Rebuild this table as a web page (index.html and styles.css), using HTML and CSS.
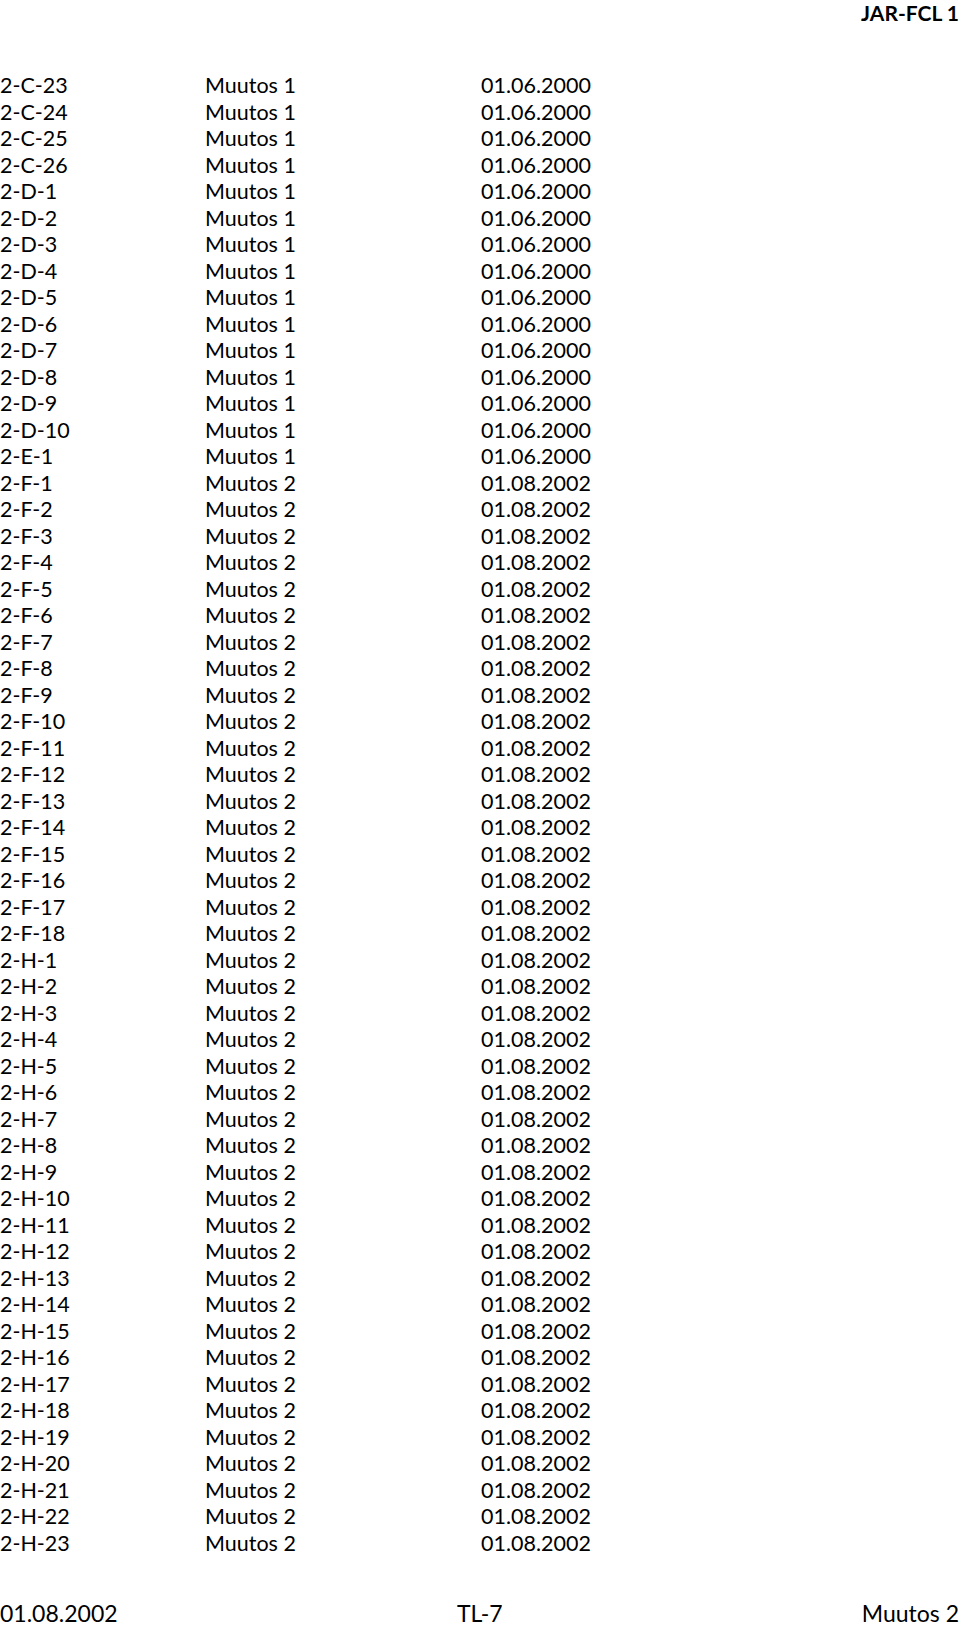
FILE: index.html
```html
<!DOCTYPE html>
<html lang="fi">
<head>
<meta charset="utf-8">
<title>JAR-FCL 1 – TL-7</title>
<link rel="stylesheet" href="styles.css">
</head>
<body>
<div class="page">
  <header class="page-header">JAR-FCL 1</header>
  <main class="list" id="list"></main>
  <footer class="page-footer">
    <span class="foot-left">01.08.2002</span>
    <span class="foot-center">TL-7</span>
    <span class="foot-right">Muutos 2</span>
  </footer>
</div>
<script src="script.js"></script>
</body>
</html>
```

FILE: script.js
```js
(function () {
  var rows = [];
  function add(prefix, from, to, change, date) {
    for (var i = from; i <= to; i++) rows.push([prefix + i, change, date]);
  }
  add('2-C-', 23, 26, 'Muutos 1', '01.06.2000');
  add('2-D-', 1, 10, 'Muutos 1', '01.06.2000');
  add('2-E-', 1, 1, 'Muutos 1', '01.06.2000');
  add('2-F-', 1, 18, 'Muutos 2', '01.08.2002');
  add('2-H-', 1, 23, 'Muutos 2', '01.08.2002');
  var list = document.getElementById('list');
  rows.forEach(function (r) {
    var row = document.createElement('div');
    row.className = 'row';
    r.forEach(function (t, i) {
      var c = document.createElement('span');
      c.className = 'cell cell-' + (i + 1);
      c.textContent = t;
      row.appendChild(c);
    });
    list.appendChild(row);
  });
})();
```

FILE: styles.css
```css
html, body {
  margin: 0;
  padding: 0;
  background: #fff;
}
body {
  font-family: "Lato", "Open Sans", sans-serif;
  color: #000;
  font-size: 21.5px;
}
.page {
  width: 960px;
  height: 1627px;
  display: flex;
  flex-direction: column;
  overflow: hidden;
}
.page-header {
  text-align: right;
  font-weight: 700;
  font-size: 21px;
  line-height: 25px;
  padding-right: 1px;
}
.list {
  margin-top: 47px;
  display: flex;
  flex-direction: column;
}
.row {
  display: grid;
  grid-template-columns: 205px 276px 1fr;
  height: 26.5px;
  line-height: 26.5px;
}
.page-footer {
  margin-top: auto;
  display: grid;
  grid-template-columns: 457px 1fr auto;
  font-size: 23px;
  line-height: 27px;
  padding-right: 1px;
}
```
